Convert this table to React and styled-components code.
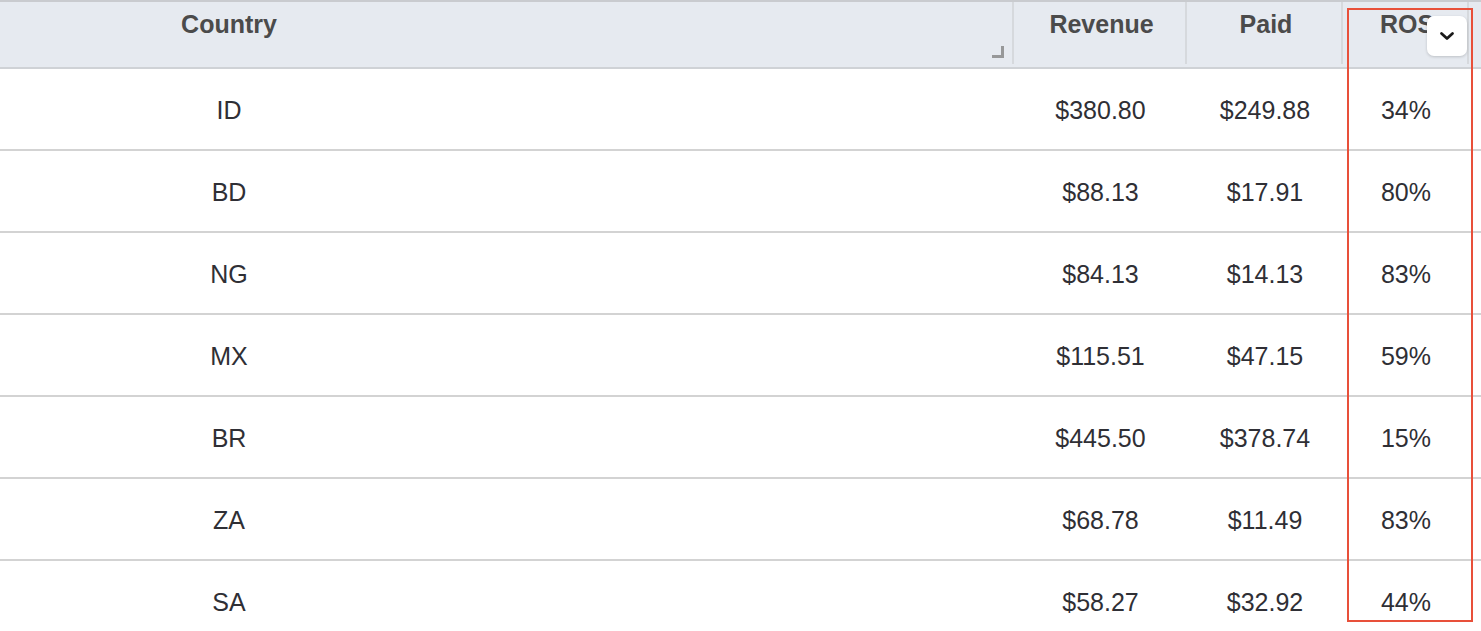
import React from "react";
import styled, { createGlobalStyle } from "styled-components";

const rows = [
  { country: "ID", revenue: "$380.80", paid: "$249.88", ros: "34%" },
  { country: "BD", revenue: "$88.13", paid: "$17.91", ros: "80%" },
  { country: "NG", revenue: "$84.13", paid: "$14.13", ros: "83%" },
  { country: "MX", revenue: "$115.51", paid: "$47.15", ros: "59%" },
  { country: "BR", revenue: "$445.50", paid: "$378.74", ros: "15%" },
  { country: "ZA", revenue: "$68.78", paid: "$11.49", ros: "83%" },
  { country: "SA", revenue: "$58.27", paid: "$32.92", ros: "44%" },
];

const App = () => {
  return (
    <>
      <GlobalStyle />
      <Table>
        <HeaderRow>
          <HeadCell>
            <CountryText>Country</CountryText>
            <ResizeGrip />
          </HeadCell>
          <HeadCell>Revenue</HeadCell>
          <HeadCell>Paid</HeadCell>
          <HeadCell>ROS</HeadCell>
          <HeadCell $last />
        </HeaderRow>

        {rows.map((row) => (
          <Row key={row.country}>
            <Cell>
              <CountryText>{row.country}</CountryText>
            </Cell>
            <Cell>{row.revenue}</Cell>
            <Cell>{row.paid}</Cell>
            <Cell>{row.ros}</Cell>
            <Cell />
          </Row>
        ))}

        <MenuButton>
          <svg width="16" height="10" viewBox="0 0 16 10" fill="none">
            <path
              d="M2.5 2.5l5.5 5 5.5-5"
              stroke="#1a1a1a"
              strokeWidth="2.8"
              strokeLinecap="round"
              strokeLinejoin="round"
            />
          </svg>
        </MenuButton>

        <Highlight />
      </Table>
    </>
  );
};

const GlobalStyle = createGlobalStyle`
  html, body {
    margin: 0;
    padding: 0;
    background: #ffffff;
    font-family: "Liberation Sans", Arial, sans-serif;
  }
`;

const Table = styled.div`
  position: relative;
  width: 1481px;
  height: 631px;
  overflow: hidden;
  border-top: 2px solid #c9cbcf;
  box-sizing: border-box;
`;

const columns = "1014px 173px 156px 126px 1fr";

const HeaderRow = styled.div`
  display: grid;
  grid-template-columns: ${columns};
  height: 65px;
  background: #e6eaf0;
  border-bottom: 2px solid #cfd2d6;
`;

const HeadCell = styled.div`
  position: relative;
  display: flex;
  justify-content: center;
  align-items: flex-start;
  padding-top: 7px;
  padding-left: 4px;
  box-sizing: border-box;
  font-size: 25px;
  line-height: 30px;
  font-weight: bold;
  color: #4b4b4b;
  border-right: ${(p) => (p.$last ? "none" : "2px solid #d6d9dd")};
  margin-bottom: 3px;

  &:first-child {
    justify-content: flex-start;
    padding-left: 0;
  }
`;

const CountryText = styled.span`
  display: block;
  width: 458px;
  text-align: center;
`;

const ResizeGrip = styled.span`
  position: absolute;
  right: 8px;
  bottom: 6px;
  width: 9px;
  height: 9px;
  border-right: 3px solid #8a8a8a;
  border-bottom: 3px solid #8a8a8a;
  opacity: 0.85;
`;

const Row = styled.div`
  display: grid;
  grid-template-columns: ${columns};
  height: 80px;
  border-bottom: 2px solid #d3d3d3;
`;

const Cell = styled.div`
  display: flex;
  align-items: center;
  justify-content: center;
  padding-top: 2px;
  font-size: 25px;
  color: #2f2f35;

  &:first-child {
    justify-content: flex-start;
  }
`;

const MenuButton = styled.div`
  position: absolute;
  left: 1427px;
  top: 14px;
  width: 40px;
  height: 40px;
  border-radius: 7px;
  background: #ffffff;
  box-shadow: 0 1px 3px rgba(0, 0, 0, 0.18);
  display: flex;
  align-items: center;
  justify-content: center;
`;

const Highlight = styled.div`
  position: absolute;
  left: 1347px;
  top: 6px;
  width: 126px;
  height: 614px;
  border: 2px solid #e8503a;
  box-sizing: border-box;
  pointer-events: none;
`;

export default App;
